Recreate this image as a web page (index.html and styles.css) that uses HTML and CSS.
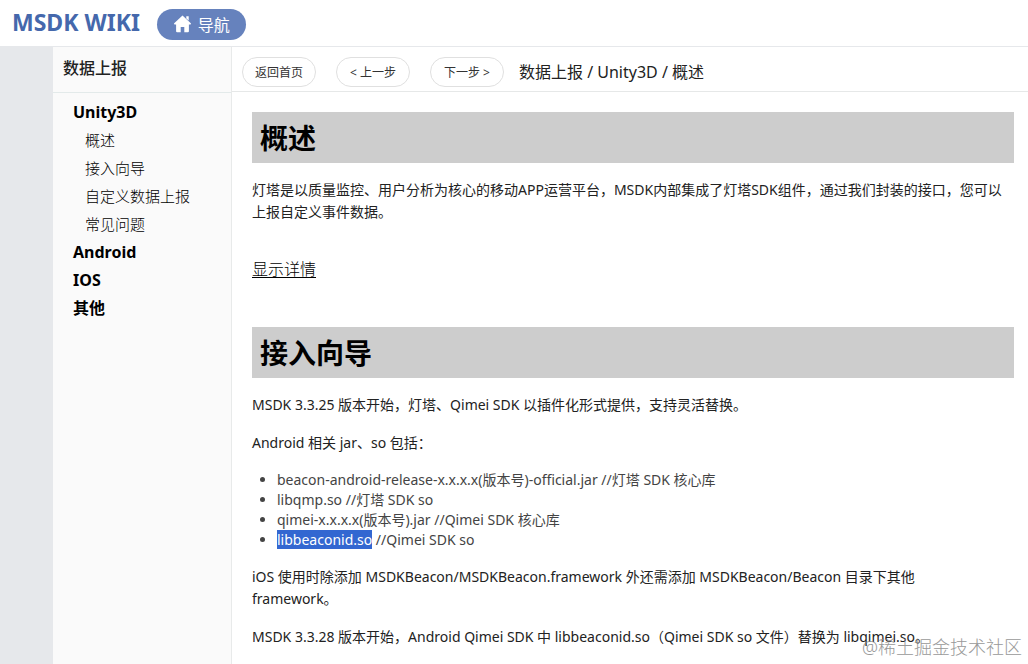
FILE: index.html
```html
<!DOCTYPE html>
<html lang="zh-CN">
<head>
<meta charset="utf-8">
<title>MSDK WIKI</title>
<link rel="stylesheet" href="styles.css">
</head>
<body>
<header class="site-header">
  <h1 class="brand">MSDK WIKI</h1>
  <button class="nav-button" type="button">
    <svg class="home-icon" viewBox="0 0 18 18" aria-hidden="true"><path d="M9 0.5 17.3 8.2Q18 9.3 16.8 9.4H15.4V16.2Q15.4 17.2 14.4 17.2H10.8V12H7.2V17.2H3.6Q2.6 17.2 2.6 16.2V9.4H1.2Q0 9.3 0.7 8.2ZM12.8 1.3H15.2V5.6L12.8 3.4Z"/></svg>
    <span>导航</span>
  </button>
</header>
<div class="layout">
  <aside class="sidebar">
    <h2 class="sidebar-title">数据上报</h2>
    <nav class="menu">
      <a class="menu-group" href="#">Unity3D</a>
      <a class="menu-item" href="#overview">概述</a>
      <a class="menu-item" href="#guide">接入向导</a>
      <a class="menu-item" href="#">自定义数据上报</a>
      <a class="menu-item" href="#">常见问题</a>
      <a class="menu-group" href="#">Android</a>
      <a class="menu-group" href="#">IOS</a>
      <a class="menu-group" href="#">其他</a>
    </nav>
  </aside>
  <main class="main">
    <div class="toolbar">
      <button class="pill" type="button">返回首页</button>
      <button class="pill" type="button">&lt; 上一步</button>
      <button class="pill" type="button">下一步 &gt;</button>
      <span class="crumbs">数据上报 / Unity3D / 概述</span>
    </div>
    <article class="article">
      <h2 class="heading" id="overview">概述</h2>
      <p>灯塔是以质量监控、用户分析为核心的移动APP运营平台，MSDK内部集成了灯塔SDK组件，通过我们封装的接口，您可以上报自定义事件数据。</p>
      <a class="details" href="#">显示详情</a>
      <h2 class="heading" id="guide">接入向导</h2>
      <p>MSDK 3.3.25 版本开始，灯塔、Qimei SDK 以插件化形式提供，支持灵活替换。</p>
      <p>Android 相关 jar、so 包括：</p>
      <ul class="files">
        <li>beacon-android-release-x.x.x.x(版本号)-official.jar //灯塔 SDK 核心库</li>
        <li>libqmp.so //灯塔 SDK so</li>
        <li>qimei-x.x.x.x(版本号).jar //Qimei SDK 核心库</li>
        <li><mark class="selected">libbeaconid.so</mark> //Qimei SDK so</li>
      </ul>
      <p>iOS 使用时除添加 MSDKBeacon/MSDKBeacon.framework 外还需添加 MSDKBeacon/Beacon 目录下其他<br>framework。</p>
      <p>MSDK 3.3.28 版本开始，Android Qimei SDK 中 libbeaconid.so（Qimei SDK so 文件）替换为 libqimei.so。</p>
    </article>
  </main>
</div>
<div class="watermark">@稀土掘金技术社区</div>
</body>
</html>
```

FILE: styles.css
```css
* { box-sizing: border-box; }
body {
  margin: 0;
  min-height: 100vh;
  display: flex;
  flex-direction: column;
  position: relative;
  overflow: hidden;
  background: #fff;
  color: #000;
  font-family: "Noto Sans", "Noto Sans CJK SC", sans-serif;
  font-size: 14px;
}
a { color: inherit; text-decoration: none; }
button { font-family: inherit; cursor: pointer; }

.site-header {
  display: flex;
  align-items: center;
  gap: 17px;
  height: 47px;
  padding: 0 12px;
  border-bottom: 1px solid #e6e8eb;
}
.brand {
  margin: 0;
  color: #4568ac;
  font-size: 23px;
  line-height: 28px;
  padding-bottom: 2px;
}
.nav-button {
  display: flex;
  align-items: center;
  gap: 6px;
  height: 31px;
  margin-top: 2px;
  padding: 0 16px;
  border: 0;
  border-radius: 16px;
  background: #6682bd;
  color: #fff;
  font-size: 16px;
}
.home-icon { width: 19px; height: 18px; fill: #fff; }

.layout {
  flex: 1;
  display: grid;
  grid-template-columns: 179px 1fr;
  padding-left: 53px;
  background: linear-gradient(90deg, #e6e8eb 53px, #fff 53px);
}
.sidebar { background: #fafafa; border-right: 1px solid #e8eaea; }
.sidebar-title {
  margin: 0;
  height: 46px;
  padding: 0 10px;
  border-bottom: 1px solid #e3eaea;
  color: #222;
  font-size: 16px;
  font-weight: 500;
  line-height: 43px;
}
.menu {
  display: flex;
  flex-direction: column;
  padding: 5px 20px;
  line-height: 28px;
}
.menu-group { font-size: 16px; font-weight: 700; }
.menu-item { padding-left: 12px; font-size: 15px; font-weight: 300; }

.main { min-width: 0; background: #fff; }
.toolbar {
  display: flex;
  align-items: center;
  gap: 20px;
  height: 45px;
  padding: 5px 10px 0;
  border-bottom: 1px solid #e6e8e8;
}
.pill {
  width: 74px;
  height: 30px;
  padding: 0;
  border: 1px solid #e0e0e0;
  border-radius: 15px;
  background: #fff;
  color: #333;
  font-size: 12px;
}
.crumbs { margin-left: -5px; color: #222; font-size: 16px; line-height: 22px; }

.article { padding: 20px 14px 0 20px; }
.heading {
  margin: 0;
  padding: 1px 8px 0;
  background: #cdcdcd;
  font-size: 28px;
  line-height: 50px;
}
.article p {
  margin: 16px 0;
  padding-right: 6px;
  color: #222;
  line-height: 22px;
}
.details {
  display: block;
  width: max-content;
  margin: 34px 0 46px;
  font-size: 16px;
  font-weight: 300;
  line-height: 24px;
  text-decoration: underline;
  text-underline-offset: 2px;
}
.files {
  margin: 16px 0;
  padding-left: 25px;
  color: #444;
  line-height: 20px;
}
.selected { background: #3367d1; color: #fff; }

.watermark {
  position: absolute;
  right: 6px;
  bottom: 4px;
  color: #888;
  font-size: 18px;
  font-weight: 300;
  line-height: 26px;
  opacity: 0.85;
}
```
